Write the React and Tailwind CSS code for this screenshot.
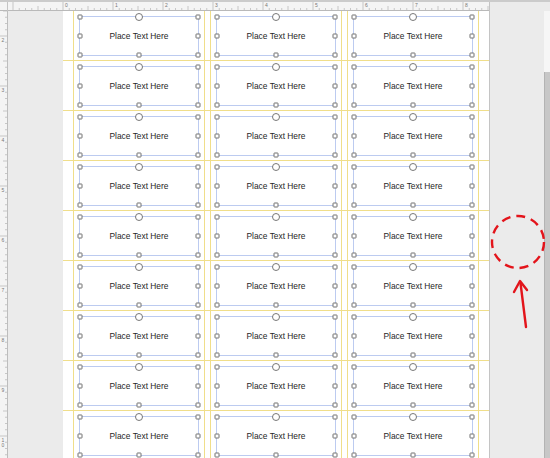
import React from 'react';

const ROWS = 9;
const COLS = 3;

const TopRuler = () => {
  const ticks = [];
  for (let i = -8; i <= 8 * 8 + 4; i++) {
    const x = 63 + i * 6.25;
    if (x < 9 || x > 489) continue;
    const h = i % 8 === 0 ? 8 : i % 4 === 0 ? 4 : 2;
    ticks.push(<line key={i} x1={x} x2={x} y1={10} y2={10 - h} stroke="#a8a8a8" strokeWidth="0.6" />);
  }
  return (
    <svg width="550" height="11" className="block">
      <rect x="0" y="0" width="550" height="2" fill="#cbcbcb" />
      <rect x="0" y="2" width="490" height="8" fill="#f4f4f4" />
      {ticks}
      {[0, 1, 2, 3, 4, 5, 6, 7, 8].map((n) => (
        <text key={n} x={65 + n * 50} y="7" fontSize="5" fill="#777" fontFamily="Liberation Sans, sans-serif">
          {n}
        </text>
      ))}
      <line x1="0" x2="490" y1="10.5" y2="10.5" stroke="#b9b9b9" strokeWidth="1" />
      <line x1="7.5" x2="7.5" y1="2" y2="11" stroke="#c4c4c4" strokeWidth="1" />
      <line x1="489.5" x2="489.5" y1="2" y2="11" stroke="#c4c4c4" strokeWidth="1" />
    </svg>
  );
};

const LeftRuler = () => {
  const ticks = [];
  for (let i = -4; i < 8 * 10; i++) {
    const y = 25 + i * 6.25;
    if (y < 0 || y > 447) continue;
    const h = i % 8 === 0 ? 7 : i % 4 === 0 ? 4 : 2;
    ticks.push(<line key={i} y1={y} y2={y} x1={7} x2={7 - h} stroke="#a8a8a8" strokeWidth="0.6" />);
  }
  return (
    <svg width="8" height="447" className="block shrink-0">
      <rect x="0" y="0" width="8" height="447" fill="#f4f4f4" />
      {ticks}
      {[2, 3, 4, 5, 6, 7, 8, 9].map((n, k) => (
        <text key={n} x="1.5" y={31 + k * 50} fontSize="5" fill="#777" fontFamily="Liberation Sans, sans-serif">
          {n}
        </text>
      ))}
      <text x="1.5" y="431" fontSize="5" fill="#777" fontFamily="Liberation Sans, sans-serif">1</text>
      <text x="1.5" y="436" fontSize="5" fill="#777" fontFamily="Liberation Sans, sans-serif">0</text>
      <line x1="7.5" x2="7.5" y1="0" y2="447" stroke="#bdbdbd" strokeWidth="1" />
    </svg>
  );
};

// selection handles sit on the text box outline
const Handle = ({ pos }) => (
  <span className={`absolute w-[5px] h-[5px] -translate-x-1/2 -translate-y-1/2 border border-[#6e6e6e] bg-white rounded-[1px] ${pos}`} />
);

const Label = () => (
  <div className="w-[132px] h-full border-x border-[#f0de8a] px-[5px] pt-[5px] pb-[4px]">
    <div className="relative h-full border border-[#bccbf0] flex items-center justify-center">
      <span className="text-[8.4px] text-[#262626] leading-none" style={{ fontFamily: '"Liberation Sans", Arial, sans-serif' }}>
        Place Text Here
      </span>
      <Handle pos="left-0 top-0" />
      <Handle pos="left-full top-0" />
      <Handle pos="left-0 top-1/2" />
      <Handle pos="left-full top-1/2" />
      <Handle pos="left-0 top-full" />
      <Handle pos="left-1/2 top-full" />
      <Handle pos="left-full top-full" />
      <span className="absolute left-1/2 top-0 w-[8px] h-[8px] -translate-x-1/2 -translate-y-1/2 rounded-full border-[1.5px] border-[#777] bg-white" />
    </div>
  </div>
);

export default function App() {
  return (
    <div className="relative w-[550px] h-[458px] overflow-hidden bg-[#ebebeb] flex flex-col">
      <TopRuler />
      <div className="flex flex-1 min-h-0">
        <LeftRuler />
        <div className="w-[55px] shrink-0 bg-[#ebebeb]" />
        <div className="w-[427px] shrink-0 bg-white border-r border-[#c4c4c4]">
          {Array.from({ length: ROWS }).map((_, r) => (
            <div key={r} className="h-[50px] border-b border-[#f0de8a] flex gap-[5px] pl-[10px]">
              {Array.from({ length: COLS }).map((_, c) => (
                <Label key={c} />
              ))}
            </div>
          ))}
        </div>
        <div className="flex-1 flex justify-end">
          <div className="w-[6px] h-full bg-[#f6f6f6] flex flex-col">
            <div className="mt-[61px] flex-1 bg-[#c7c7c7] border-l border-[#b3b3b3]" />
          </div>
        </div>
      </div>

      <svg className="absolute left-[486px] top-[208px] pointer-events-none" width="64" height="130" viewBox="486 208 64 130">
        <circle cx="518" cy="242" r="26" fill="none" stroke="#e3141b" strokeWidth="2.4" strokeDasharray="9 6" />
        <line x1="526" y1="327" x2="520.5" y2="283" stroke="#e3141b" strokeWidth="2.4" strokeLinecap="round" />
        <polyline points="514,292 520,281 527,290" fill="none" stroke="#e3141b" strokeWidth="2.4" strokeLinecap="round" strokeLinejoin="round" />
      </svg>
    </div>
  );
}
